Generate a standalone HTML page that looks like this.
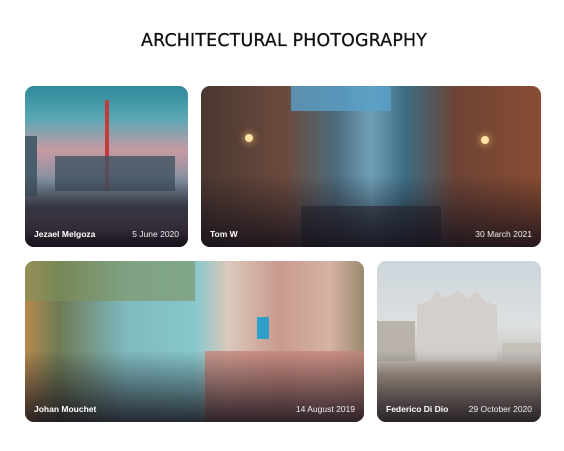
<!DOCTYPE html>
<html><head><meta charset="utf-8"><style>
*{margin:0;padding:0;box-sizing:border-box}
body{width:564px;height:451px;background:#fff;position:relative;overflow:hidden;font-family:"Liberation Sans",sans-serif}
h1{position:absolute;left:141px;top:30px;width:284px;font:normal 18px "DejaVu Sans",sans-serif;letter-spacing:0.2px;color:#111;white-space:nowrap;transform-origin:left top;transform:scaleX(0.965);-webkit-text-stroke:0.3px #111}
.c{position:absolute;border-radius:9px;overflow:hidden}
.c .sh{position:absolute;left:0;right:0;bottom:0;height:45%;background:linear-gradient(to bottom,rgba(20,15,25,0),rgba(20,15,25,.85))}
.c span{position:absolute;bottom:8px;color:#fff;font-size:8.5px;font-weight:bold}
.c .l{left:9px}.c .r{right:9px;font-weight:normal;color:#eee}
</style></head><body>
<h1>ARCHITECTURAL PHOTOGRAPHY</h1>

<div class="c" style="left:25px;top:86px;width:163px;height:161px;background:linear-gradient(to bottom,#2e8a9a 0%,#5aa7b5 20%,#c79aa3 40%,#7f8fa0 60%,#4a4f5e 75%,#6a5a6c 90%,#2c2430 100%)">
<div style="position:absolute;left:80px;top:14px;width:4px;height:90px;background:#c33b3b"></div>
<div style="position:absolute;left:0;top:50px;width:12px;height:60px;background:#4a5d6a"></div>
<div style="position:absolute;left:30px;top:70px;width:120px;height:35px;background:#415262;opacity:.8"></div>
<div class="sh"></div><span class="l">Jezael Melgoza</span><span class="r">5 June 2020</span></div>

<div class="c" style="left:201px;top:86px;width:340px;height:161px;background:linear-gradient(to right,#4a3730 0%,#6b4a3d 25%,#4d6c7e 40%,#6fa0b8 50%,#3d6d84 60%,#6d4335 75%,#8a4d33 100%)">
<div style="position:absolute;left:90px;top:0;width:100px;height:25px;background:#5aa0c8;opacity:.8"></div>
<div style="position:absolute;left:100px;top:120px;width:140px;height:41px;background:#2b2c36;opacity:.6"></div>
<div style="position:absolute;left:44px;top:48px;width:8px;height:8px;border-radius:50%;background:#ffe6a8;box-shadow:0 0 8px #ffcc70"></div>
<div style="position:absolute;left:280px;top:50px;width:8px;height:8px;border-radius:50%;background:#ffe6a8;box-shadow:0 0 8px #ffcc70"></div>
<div class="sh"></div><span class="l">Tom W</span><span class="r">30 March 2021</span></div>

<div class="c" style="left:25px;top:261px;width:339px;height:161px;background:linear-gradient(to right,#b88a4f 0%,#6e7a55 10%,#7fbac0 30%,#86c8cc 50%,#dcc8bc 60%,#c99a8e 75%,#d6b3a4 90%,#9a8a6e 100%)">
<div style="position:absolute;left:0;top:0;width:170px;height:40px;background:#7f915a;opacity:.6"></div>
<div style="position:absolute;left:180px;top:90px;width:159px;height:71px;background:#c98a7e;opacity:.8"></div>
<div style="position:absolute;left:232px;top:56px;width:12px;height:22px;background:#2fa0c8"></div>
<div class="sh"></div><span class="l">Johan Mouchet</span><span class="r">14 August 2019</span></div>

<div class="c" style="left:377px;top:261px;width:164px;height:161px;background:linear-gradient(to bottom,#cdd6dc 0%,#dde0e0 40%,#c9c2bd 62%,#b8a896 70%,#9d8f80 100%)">
<div style="position:absolute;left:40px;top:30px;width:80px;height:70px;background:#d4cfcc;clip-path:polygon(0 20%,15% 15%,25% 0,35% 10%,50% 0,65% 10%,75% 0,85% 15%,100% 20%,100% 100%,0 100%)"></div>
<div style="position:absolute;left:0;top:60px;width:38px;height:40px;background:#b9b3ab"></div>
<div style="position:absolute;left:125px;top:82px;width:39px;height:18px;background:#c6c1bb"></div>
<div class="sh"></div><span class="l">Federico Di Dio</span><span class="r">29 October 2020</span></div>
</body></html>
